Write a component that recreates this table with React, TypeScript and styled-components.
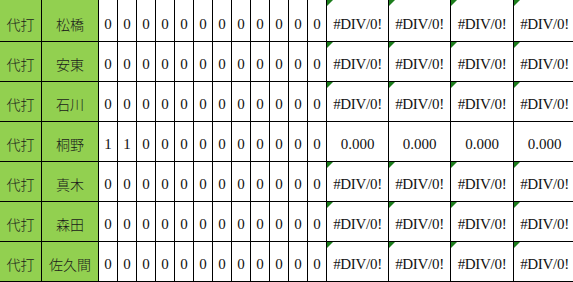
import styled, { createGlobalStyle } from 'styled-components';

const GlobalStyle = createGlobalStyle`
    html, body {
        margin: 0;
        padding: 0;
        background: #fff;
        overflow: hidden;
    }
`;

const Sheet = styled.div`
    display: grid;
    grid-template-columns: 42px 57px repeat(12, 19px) 62px 62px 63px 62px;
    grid-template-rows: 42px repeat(6, 40px);
    width: 573px;
    height: 282px;
    overflow: hidden;
`;

const Cell = styled.div<{ $label?: boolean; $error?: boolean }>`
    position: relative;
    box-sizing: border-box;
    display: flex;
    align-items: flex-end;
    justify-content: center;
    padding-bottom: 8px;
    border-right: 1px solid #000;
    border-bottom: 1px solid #000;
    background: ${(p) => (p.$label ? '#92d050' : '#fff')};
    color: ${(p) => (p.$label ? '#1a1a1a' : '#111')};
    font-family: ${(p) =>
        p.$label
            ? '"Noto Sans CJK JP", "Noto Sans", sans-serif'
            : '"Liberation Serif", "DejaVu Serif", serif'};
    font-size: ${(p) => (p.$label ? '14px' : '15px')};
    font-weight: ${(p) => (p.$label ? 300 : 400)};
    letter-spacing: ${(p) => (p.$error ? '-0.3px' : '0')};
    line-height: 17px;
    white-space: nowrap;

    &::before {
        content: '';
        display: ${(p) => (p.$error ? 'block' : 'none')};
        position: absolute;
        top: 0;
        left: 0;
        width: 0;
        height: 0;
        border-top: 6px solid #1c7d1c;
        border-right: 6px solid transparent;
    }
`;

type Player = {
    name: string,
    counts: number[],
    rates: string[] | null
}

const zeros = Array(12).fill(0);

const players: Player[] = [
    { name: '松橋', counts: zeros, rates: null },
    { name: '安東', counts: zeros, rates: null },
    { name: '石川', counts: zeros, rates: null },
    { name: '桐野', counts: [1, 1, 0, 0, 0, 0, 0, 0, 0, 0, 0, 0], rates: ['0.000', '0.000', '0.000', '0.000'] },
    { name: '真木', counts: zeros, rates: null },
    { name: '森田', counts: zeros, rates: null },
    { name: '佐久間', counts: zeros, rates: null },
];

const App = () => (
    <>
        <GlobalStyle />
        <Sheet>
            {players.map((player) => [
                <Cell key={`${player.name}-role`} $label>代打</Cell>,
                <Cell key={`${player.name}-name`} $label>{player.name}</Cell>,
                ...player.counts.map((count, i) => (
                    <Cell key={`${player.name}-c${i}`}>{count}</Cell>
                )),
                ...(player.rates ?? Array(4).fill('#DIV/0!')).map((rate, i) => (
                    <Cell key={`${player.name}-r${i}`} $error={!player.rates}>{rate}</Cell>
                )),
            ])}
        </Sheet>
    </>
);

export default App;
